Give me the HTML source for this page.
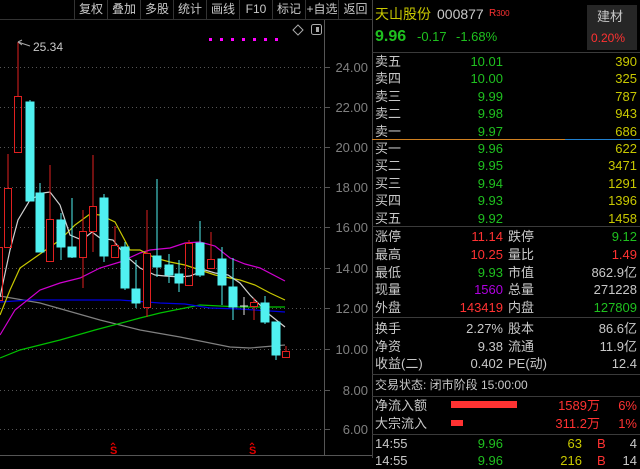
<!DOCTYPE html>
<html><head><meta charset="utf-8"><style>
*{margin:0;padding:0;box-sizing:border-box}
body{width:640px;height:458px;background:#000;overflow:hidden;position:relative;font-family:"Liberation Sans","Noto Sans CJK SC",sans-serif;font-size:13px;color:#c8c8c8}
.a{position:absolute;white-space:nowrap;line-height:16px}
.r{text-align:right}
.g{color:#1fc01f}.y{color:#c8c800}.rd{color:#ff3232}.w{color:#c8c8c8}.p{color:#b000e0}
.tb{position:absolute;top:0;height:19px;line-height:19px;font-size:12px;color:#c8c8c8;text-align:center;border-left:1px solid #333}
.hl{position:absolute;left:372px;width:268px;height:1px;background:#3a3a3a}
</style></head><body>
<div style="position:absolute;left:0;top:19px;width:372px;height:1px;background:#333"></div>
<div style="position:absolute;left:0;top:455px;width:372px;height:1px;background:#555"></div>
<div style="position:absolute;left:372px;top:0;width:1px;height:458px;background:#444"></div>
<div class="tb" style="left:74px;width:33px">复权</div>
<div class="tb" style="left:107px;width:33px">叠加</div>
<div class="tb" style="left:140px;width:33px">多股</div>
<div class="tb" style="left:173px;width:33px">统计</div>
<div class="tb" style="left:206px;width:33px">画线</div>
<div class="tb" style="left:239px;width:33px">F10</div>
<div class="tb" style="left:272px;width:33px">标记</div>
<div class="tb" style="left:305px;width:33px">+自选</div>
<div class="tb" style="left:338px;width:34px">返回</div>
<svg style="position:absolute;left:0;top:0" width="372" height="458">
<g stroke="#555" stroke-dasharray="1,3" stroke-width="1">
<line x1="0" y1="67.5" x2="325" y2="67.5"/><line x1="0" y1="107.5" x2="325" y2="107.5"/><line x1="0" y1="147.5" x2="325" y2="147.5"/><line x1="0" y1="187.5" x2="325" y2="187.5"/><line x1="0" y1="227.5" x2="325" y2="227.5"/><line x1="0" y1="268.5" x2="325" y2="268.5"/><line x1="0" y1="308.5" x2="325" y2="308.5"/><line x1="0" y1="349.5" x2="325" y2="349.5"/><line x1="0" y1="390.5" x2="325" y2="390.5"/><line x1="0" y1="429.5" x2="325" y2="429.5"/>
</g>
<line x1="324.5" y1="20" x2="324.5" y2="455" stroke="#555"/>
<g stroke="#555"><line x1="325" y1="67.5" x2="330" y2="67.5"/><line x1="325" y1="107.5" x2="330" y2="107.5"/><line x1="325" y1="147.5" x2="330" y2="147.5"/><line x1="325" y1="187.5" x2="330" y2="187.5"/><line x1="325" y1="227.5" x2="330" y2="227.5"/><line x1="325" y1="268.5" x2="330" y2="268.5"/><line x1="325" y1="308.5" x2="330" y2="308.5"/><line x1="325" y1="349.5" x2="330" y2="349.5"/><line x1="325" y1="390.5" x2="330" y2="390.5"/><line x1="325" y1="429.5" x2="330" y2="429.5"/></g>
<g fill="#808080" font-size="13" text-anchor="end" font-family="Liberation Sans">
<text x="368" y="72">24.00</text><text x="368" y="112">22.00</text><text x="368" y="152">20.00</text><text x="368" y="192">18.00</text><text x="368" y="232">16.00</text><text x="368" y="273">14.00</text><text x="368" y="313">12.00</text><text x="368" y="354">10.00</text><text x="368" y="395">8.00</text><text x="368" y="434">6.00</text>
</g>
<g fill="none" stroke-width="1.2">
<polyline stroke="#808080" points="0,296 40,303 100,320 140,330 180,337 230,347 250,348 285,345"/>
<polyline stroke="#00c000" points="0,358 20,350 60,340 95,330 140,318 160,313 200,305 240,307 285,307"/>
<polyline stroke="#0000e0" points="0,302 30,300 120,300 160,303 185,304 210,308 240,309 285,312"/>
<polyline stroke="#d000d0" points="0,335 15,310 40,290 60,283 80,278 100,268 120,262 140,253 150,250 170,248 185,243 200,242 215,246 230,258 245,264 260,268 285,281"/>
<polyline stroke="#c8c800" points="0,315 10,290 20,268 40,254 60,240 75,225 90,214 100,215 115,222 130,250 140,250 155,258 170,262 185,265 200,270 215,275 225,277 240,280 255,285 270,293 285,300"/>
<polyline stroke="#d0d0d0" points="0,297 10,250 18,220 30,200 43,193 50,192 60,205 70,235 82,240 92,232 100,238 113,240 125,255 140,268 155,275 165,276 180,277 190,276 205,270 215,273 228,275 240,283 250,295 260,305 270,315 285,327"/>
</g>
<g stroke="#e02020" fill="none">
<line x1="8" y1="154" x2="8" y2="188"/><rect x="4.5" y="188.5" width="7" height="59"/>
<line x1="18" y1="42" x2="18" y2="96"/><rect x="14.5" y="96.5" width="7" height="56"/>
<line x1="50" y1="165" x2="50" y2="260"/><rect x="46.5" y="219.5" width="7" height="42" fill="#000"/>
<line x1="83" y1="210" x2="83" y2="288"/><rect x="79.5" y="231.5" width="7" height="26" fill="#000"/>
<line x1="93" y1="155" x2="93" y2="252"/><rect x="89.5" y="206.5" width="7" height="25" fill="#000"/>
<line x1="115" y1="226" x2="115" y2="245"/><rect x="111.5" y="245.5" width="7" height="12"/>
<line x1="147" y1="210" x2="147" y2="317"/><rect x="143.5" y="253.5" width="7" height="54" fill="#000"/>
<line x1="189" y1="240" x2="189" y2="243"/><rect x="185.5" y="243.5" width="7" height="42"/>
<line x1="211" y1="232" x2="211" y2="259"/><rect x="207.5" y="259.5" width="7" height="9"/>
<line x1="254" y1="298" x2="254" y2="320"/><rect x="250.5" y="302.5" width="7" height="4" fill="#000"/>
<line x1="286" y1="346" x2="286" y2="351"/><rect x="282.5" y="351.5" width="7" height="6"/>
<rect x="-3.5" y="247.5" width="6" height="53"/>
</g>
<g fill="#50f0f0" stroke="#50f0f0">
<line x1="30" y1="100" x2="30" y2="201"/><rect x="26" y="102" width="8" height="99"/>
<line x1="40" y1="183" x2="40" y2="252"/><rect x="36" y="193" width="8" height="59"/>
<line x1="61" y1="213" x2="61" y2="260"/><rect x="57" y="220" width="8" height="27"/>
<line x1="72" y1="198" x2="72" y2="258"/><rect x="68" y="247" width="8" height="10"/>
<line x1="104" y1="194" x2="104" y2="262"/><rect x="100" y="198" width="8" height="58"/>
<line x1="125" y1="242" x2="125" y2="290"/><rect x="121" y="247" width="8" height="41"/>
<line x1="136" y1="260" x2="136" y2="308"/><rect x="132" y="289" width="8" height="14"/>
<line x1="157" y1="179" x2="157" y2="277"/><rect x="153" y="256" width="8" height="11"/>
<line x1="169" y1="254" x2="169" y2="283"/><rect x="165" y="265" width="8" height="10"/>
<line x1="179" y1="260" x2="179" y2="292"/><rect x="175" y="274" width="8" height="9"/>
<line x1="200" y1="221" x2="200" y2="277"/><rect x="196" y="243" width="8" height="32"/>
<line x1="222" y1="247" x2="222" y2="305"/><rect x="218" y="259" width="8" height="26"/>
<line x1="233" y1="258" x2="233" y2="320"/><rect x="229" y="287" width="8" height="20"/>
<line x1="265" y1="296" x2="265" y2="324"/><rect x="261" y="303" width="8" height="19"/>
<line x1="276" y1="322" x2="276" y2="360"/><rect x="272" y="322" width="8" height="33"/>
</g>
<g stroke="#e0e0e0"><line x1="240" y1="306" x2="248" y2="306"/><line x1="244" y1="297" x2="244" y2="315"/></g>
<path d="M18 42 L22 40 M18 42 L22 45 M18 42 L30 46" stroke="#aaa" fill="none"/>
<text x="33" y="51" fill="#c8c8c8" font-size="12" font-family="Liberation Sans">25.34</text>
<g fill="#ff00ff"><rect x="209" y="38" width="3" height="3"/><rect x="220" y="38" width="3" height="3"/><rect x="231" y="38" width="3" height="3"/><rect x="242" y="38" width="3" height="3"/><rect x="253" y="38" width="3" height="3"/><rect x="264" y="38" width="3" height="3"/><rect x="275" y="38" width="3" height="3"/></g>
<path d="M298 25 L303 30 L298 35 L293 30 Z" stroke="#aaa" fill="none"/>
<rect x="311.5" y="24.5" width="10" height="10" rx="2" stroke="#aaa" fill="none"/><rect x="316" y="27" width="3" height="5" fill="#aaa"/>
<g fill="#e00000" font-size="11" font-weight="bold" font-family="Liberation Sans"><text x="110" y="454">S</text><text x="249" y="454">S</text></g>
<path d="M111 445 l2 -2 l2 2 M250 445 l2 -2 l2 2" stroke="#e00000" fill="none"/>
</svg>

<div class="a y" style="left:375px;top:6px;font-size:14px">天山股份</div>
<div class="a w" style="left:437px;top:6px;font-size:14px">000877</div>
<div class="a rd" style="left:489px;top:6px;font-size:10px">R<span style="font-size:8px">300</span></div>
<div style="position:absolute;left:587px;top:5px;width:50px;height:45px;background:#262626"></div>
<div class="a w" style="left:597px;top:9px;font-size:13px">建材</div>
<div class="a rd" style="left:591px;top:30px;font-size:12px">0.20%</div>
<div class="a g" style="left:375px;top:28px;font-size:16px;font-weight:bold;line-height:18px">9.96</div>
<div class="a g" style="left:417px;top:29px;font-size:13px">-0.17</div>
<div class="a g" style="left:456px;top:29px;font-size:13px">-1.68%</div>
<div class="hl" style="top:52px"></div>
<div style="position:absolute;left:372px;top:139px;width:193px;height:1px;background:#d08020"></div>
<div style="position:absolute;left:565px;top:139px;width:75px;height:1px;background:#2080d0"></div>
<div class="hl" style="top:226px"></div>
<div class="hl" style="top:317px"></div>
<div class="hl" style="top:374px"></div>
<div class="hl" style="top:396px"></div>
<div class="hl" style="top:434px"></div>

<div class="a" style="left:375px;top:53px;line-height:17.4px">卖五<br>卖四<br>卖三<br>卖二<br>卖一</div>
<div class="a g r" style="right:137px;top:53px;line-height:17.4px">10.01<br>10.00<br>9.99<br>9.98<br>9.97</div>
<div class="a y r" style="right:3px;top:53px;line-height:17.4px">390<br>325<br>787<br>943<br>686</div>
<div class="a" style="left:375px;top:140px;line-height:17.4px">买一<br>买二<br>买三<br>买四<br>买五</div>
<div class="a g r" style="right:137px;top:140px;line-height:17.4px">9.96<br>9.95<br>9.94<br>9.93<br>9.92</div>
<div class="a y r" style="right:3px;top:140px;line-height:17.4px">622<br>3471<br>1291<br>1396<br>1458</div>

<div class="a" style="left:375px;top:228px;line-height:17.8px">涨停<br>最高<br>最低<br>现量<br>外盘</div>
<div class="a r" style="right:137px;top:228px;line-height:17.8px"><span class="rd">11.14</span><br><span class="rd">10.25</span><br><span class="g">9.93</span><br><span class="p">1560</span><br><span class="rd">143419</span></div>
<div class="a" style="left:508px;top:228px;line-height:17.8px">跌停<br>量比<br>市值<br>总量<br>内盘</div>
<div class="a r" style="right:3px;top:228px;line-height:17.8px"><span class="g">9.12</span><br><span class="rd">1.49</span><br>862.9亿<br>271228<br><span class="g">127809</span></div>

<div class="a" style="left:375px;top:320px;line-height:17.6px">换手<br>净资<br>收益(二)</div>
<div class="a r" style="right:137px;top:320px;line-height:17.6px">2.27%<br>9.38<br>0.402</div>
<div class="a" style="left:508px;top:320px;line-height:17.6px">股本<br>流通<br>PE(动)</div>
<div class="a r" style="right:3px;top:320px;line-height:17.6px">86.6亿<br>11.9亿<br>12.4</div>

<div class="a" style="left:375px;top:377px;font-size:12px">交易状态: 闭市阶段 15:00:00</div>

<div class="a" style="left:375px;top:397px;line-height:18px">净流入额<br>大宗流入</div>
<div style="position:absolute;left:451px;top:401px;width:66px;height:7px;background:#ff3232"></div>
<div style="position:absolute;left:451px;top:420px;width:12px;height:6px;background:#ff3232"></div>
<div class="a rd r" style="right:40px;top:397px;line-height:18px">1589万<br>311.2万</div>
<div class="a rd r" style="right:3px;top:397px;line-height:18px">6%<br>1%</div>

<div class="a" style="left:375px;top:435px;line-height:17px">14:55<br>14:55</div>
<div class="a g r" style="right:137px;top:435px;line-height:17px">9.96<br>9.96</div>
<div class="a y r" style="right:58px;top:435px;line-height:17px">63<br>216</div>
<div class="a rd" style="left:597px;top:435px;line-height:17px">B<br>B</div>
<div class="a r" style="right:3px;top:435px;line-height:17px">4<br>14</div>
</body></html>
